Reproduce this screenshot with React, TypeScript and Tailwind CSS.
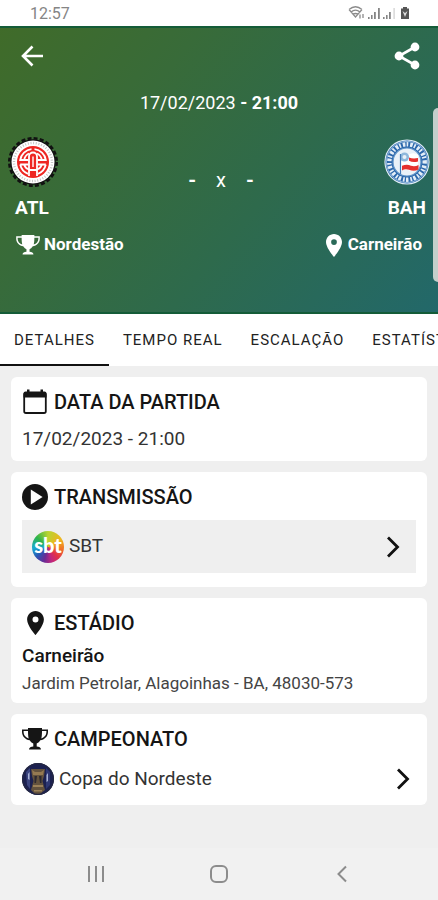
import type { ReactNode } from "react";

function TrophyIcon({ className }: { className: string }) {
  return (
    <svg viewBox="0 0 26 22" className={className} aria-hidden="true">
      <path
        d="M6 0H20V1.500H26V4C26 8.500 22.500 11.700 18.300 12.300C17.200 14 15.700 15.200 14.700 15.600V18.500C17 18.700 19 19.500 19 21.500H7C7 19.500 9 18.700 11.300 18.500V15.600C10.300 15.200 8.800 14 7.700 12.300C3.500 11.700 0 8.500 0 4V1.500H6ZM1.600 3V4C1.600 7 3.800 9.600 6.700 10.400C6.200 8.500 6 6.200 6 3ZM24.400 3H20C20 6.200 19.800 8.500 19.300 10.400C22.200 9.600 24.400 7 24.400 4Z"
        fill="currentColor"
        fillRule="evenodd"
      />
    </svg>
  );
}

function PinIcon({ className }: { className: string }) {
  return (
    <svg viewBox="5 2 14 20" className={className} aria-hidden="true">
      <path
        d="M12 2C8.130 2 5 5.130 5 9c0 5.250 7 13 7 13s7-7.750 7-13c0-3.870-3.130-7-7-7zm0 9.500a2.500 2.500 0 1 1 0-5 2.500 2.500 0 0 1 0 5z"
        fill="currentColor"
      />
    </svg>
  );
}

function CalendarIcon() {
  return (
    <svg viewBox="0 0 24 26" className="h-[26px] w-6" aria-hidden="true">
      <rect x="1.200" y="4" width="21.600" height="20" rx="1.800" fill="none" stroke="currentColor" strokeWidth="1.800" />
      <path d="M0.500 8.500V4.500a2 2 0 0 1 2-2H4V0.500H6.500V2.500H17.500V0.500H20V2.500H21.500a2 2 0 0 1 2 2V8.500Z" fill="currentColor" />
    </svg>
  );
}

function PlayIcon() {
  return (
    <svg viewBox="0 0 26 26" className="size-[26px]" aria-hidden="true">
      <circle cx="13" cy="13" r="13" fill="currentColor" />
      <path d="M8.800 5.500V20.500L20.600 13Z" fill="#fff" />
    </svg>
  );
}

function ChevronRight() {
  return (
    <svg viewBox="0 0 14 22" className="h-[22px] w-3.5" aria-hidden="true">
      <path d="M2 1.500L11.500 11L2 20.500" fill="none" stroke="#111" strokeWidth="2.800" />
    </svg>
  );
}

function AtlCrest() {
  return (
    <svg viewBox="-25 -25 50 50" className="size-[50px]" role="img" aria-label="ATL">
      <circle r="22.800" fill="#111" />
      <circle r="23.700" fill="none" stroke="#111" strokeWidth="2.600" strokeDasharray="4 2.200" />
      <circle r="21.500" fill="#fff" />
      <circle r="19" fill="none" stroke="#c4c4c4" strokeWidth="2.400" strokeDasharray="1 1.700" />
      <circle r="16" fill="#ee2622" />
      <g fill="none" stroke="#fff" strokeWidth="1.800">
        <path d="M-1.500-12.800A12.900 12.900 0 0 0-12.800-2H-4.500M1.500-12.800A12.900 12.900 0 0 1 12.800-2H4.500" />
        <path d="M-12.800 2.500H-4.500M12.800 2.500H4.500M-12.800 2.500A12.900 12.900 0 0 0-5 11.800M12.800 2.500A12.900 12.900 0 0 1 5 11.800" />
        <path d="M-4 14V-5.500A4 4 0 0 1 4-5.500V14M-4 8H4" />
        <path d="M-4-8.500A8.500 8.500 0 0 0-8.800-2M4-8.500A8.500 8.500 0 0 1 8.800-2M-8.800 2.500Q-8 6-4 7.500M8.800 2.500Q8 6 4 7.500" />
        <path d="M0-5.500V5" strokeWidth="1.400" />
      </g>
    </svg>
  );
}

function BahCrest() {
  return (
    <svg viewBox="-23 -23 46 46" className="size-[46px]" role="img" aria-label="BAH">
      <circle r="22.600" fill="#e3eff8" />
      <circle r="21.500" fill="#2b67ab" />
      <circle r="17.700" fill="none" stroke="#e4eef7" strokeWidth="4.400" strokeDasharray="1.700 1.900 2.600 1.300" />
      <circle r="20.600" fill="none" stroke="#9cbfe0" strokeWidth="0.900" />
      <circle r="14" fill="#e9f1f8" />
      <circle r="14" fill="none" stroke="#5f93c8" strokeWidth="1.200" />
      <path d="M-6-8.500Q-1-6 3-8Q7-10 11-7V7.500Q6 10.500 1 8Q-3 7-6 9Z" fill="#fff" />
      <path d="M2-4.500Q6-2.800 11-4V-0.500Q6 1 2-1.200ZM-5 3.800Q0 1.500 4 3.800Q8 5 11.500 3V7.500Q7 9.800 2 7.800Q-2 6.500-5 8.500Z" fill="#e5302d" />
      <circle cx="-2.500" cy="-5" r="4.600" fill="#8fb8dc" />
      <circle cx="-2.500" cy="-5" r="2" fill="#e9f1f8" />
      <path d="M-6.500-8V12" stroke="#3f78b6" strokeWidth="1.200" />
    </svg>
  );
}

function SbtLogo() {
  return (
    <span className="flex size-8 items-center justify-center rounded-full bg-[conic-gradient(#b9d432,#f0b51f_60deg,#f0702a_100deg,#e2304a_135deg,#c0267e_165deg,#6b2a94_195deg,#2a56b4_230deg,#18a8d0_265deg,#2db34a_310deg,#b9d432)]">
      <svg viewBox="0 0 32 32" className="size-8" aria-hidden="true">
        <text x="16" y="22" textAnchor="middle" fontFamily="Lato, sans-serif" fontWeight="900" fontSize="20" fill="#fff">
          sbt
        </text>
      </svg>
    </span>
  );
}

function CupBadge() {
  return (
    <svg viewBox="0 0 32 32" className="size-8" aria-hidden="true">
      <circle cx="16" cy="16" r="16" fill="#1c2150" />
      <path d="M4 9L8 5V26L5 22Z" fill="#3b4580" />
      <path d="M24 5L28 9V22L24 26Z" fill="#2e3772" />
      <path d="M6 11L7.500 9V17L6 16ZM24.500 12L26 10V18L24.500 19Z" fill="#a9b3d6" />
      <path d="M9 6H23L22 13L20.500 18L23 27L18 31H13L9 27L11.500 18L10 13Z" fill="#63523d" />
      <path d="M10 7L13 9H19L22 7L21 12H11Z" fill="#957a52" />
      <path d="M12.500 13H15L14 20H12.500ZM17 13H19.500V20H18Z" fill="#2c2830" />
      <path d="M11 22H21V24H11ZM12 27H20V28.500H12Z" fill="#9b8158" />
      <circle cx="16" cy="16" r="15.400" fill="none" stroke="#252842" strokeWidth="1.200" />
    </svg>
  );
}

function StatusBar() {
  return (
    <div className="flex h-[26px] items-center justify-between bg-white pr-7 pl-[30px] text-[#858585]">
      <span className="pt-0.5 text-base">12:57</span>
      <svg viewBox="0 0 62 16" className="h-4 w-[62px]" aria-hidden="true">
        <g fill="none" stroke="#8b8b8b" strokeWidth="1.300">
          <path d="M1 4.500Q7.500-1 14 4.500M3 7Q7.500 3.300 12 7M5.200 9.500Q7.500 7.500 9.800 9.500M1 4.500L7.500 12L14 4.500" />
          <path d="M12 9.500V13.500M15 9V13" />
        </g>
        <g fill="#858585">
          <path d="M20 12h1.600v2H20ZM23 10h1.600v4H23ZM26 7h1.800v7H26ZM30 3h1.800v11H30Z" />
          <path d="M35 12h1.600v2H35ZM38 10h1.600v4H38ZM41 7h1.800v7H41Z" />
          <path d="M45.500 3h1.200v11h-1.200Z" opacity=".4" />
          <path d="M55 2h4v1.500h2V14H53V3.500h2Z" fill="#555" />
        </g>
        <path d="M54.500 6L57 8L59.500 6L57 12Z" fill="#ddd" />
      </svg>
    </div>
  );
}

function MatchHeader() {
  return (
    <header className="relative border-y-2 border-[#145c38] bg-[linear-gradient(130deg,#406b29_0%,#386b39_30%,#2e6a4c_60%,#22686a_100%)] bg-origin-border pb-[55px] text-white">
      <div className="flex h-14 items-center justify-between pr-[18px] pl-[21px]">
        <button type="button" aria-label="Voltar">
          <svg viewBox="0 0 22 22" className="size-[22px]" aria-hidden="true">
            <path d="M22 11H2.500M11.500 1.500L2 11L11.500 20.500" fill="none" stroke="#fff" strokeWidth="2.600" />
          </svg>
        </button>
        <button type="button" aria-label="Compartilhar">
          <svg viewBox="0 0 26 28" className="h-7 w-[26px]" aria-hidden="true">
            <path d="M21 5L5 14L21 23" fill="none" stroke="#fff" strokeWidth="2.600" />
            <circle cx="21" cy="5" r="4.400" fill="#fff" />
            <circle cx="5" cy="14" r="4.400" fill="#fff" />
            <circle cx="21" cy="23" r="4.400" fill="#fff" />
          </svg>
        </button>
      </div>
      <p className="mt-[7px] text-center text-lg leading-6">
        17/02/2023 <b>- 21:00</b>
      </p>
      <div className="mt-[22px] flex items-start justify-between px-2">
        <div>
          <AtlCrest />
          <p className="mt-[9px] pl-[7px] text-[19px] leading-6 font-bold">ATL</p>
        </div>
        <div className="flex h-[86px] items-center gap-5 text-xl">
          <b>-</b>
          <span>x</span>
          <b>-</b>
        </div>
        <div className="flex flex-col items-end">
          <div className="py-0.5">
            <BahCrest />
          </div>
          <p className="mt-[9px] pr-1 text-[19px] leading-6 font-bold">BAH</p>
        </div>
      </div>
      <div className="mt-2.5 flex h-6 items-center justify-between px-4 text-[17px] font-bold">
        <p className="flex items-center gap-1">
          <TrophyIcon className="h-5 w-6" />
          Nordestão
        </p>
        <p className="flex items-center gap-1.5">
          <PinIcon className="h-[23px] w-4" />
          Carneirão
        </p>
      </div>
      <div className="absolute top-20 right-0 h-[174px] w-[5px] rounded-l-md bg-[#c3cfcb]" />
    </header>
  );
}

const tabs = ["DETALHES", "TEMPO REAL", "ESCALAÇÃO", "ESTATÍSTICAS"];

function Tabs() {
  return (
    <nav className="flex h-[52px] overflow-hidden bg-white text-[15px] tracking-[1px] text-[#222]">
      {tabs.map((tab, index) => (
        <button
          key={tab}
          type="button"
          className={`shrink-0 border-b-2 px-3.5 pt-0.5 whitespace-nowrap ${index === 0 ? "border-[#111]" : "border-transparent"}`}
        >
          {tab}
        </button>
      ))}
    </nav>
  );
}

function Card({ icon, title, children }: { icon: ReactNode; title: string; children: ReactNode }) {
  return (
    <section className="rounded-md bg-white px-[11px] pt-3">
      <h2 className="flex h-[26px] items-center gap-1.5 text-xl font-medium text-[#151515]">
        <span className="flex w-[26px] justify-center">{icon}</span>
        {title}
      </h2>
      {children}
    </section>
  );
}

function NavBar() {
  return (
    <footer className="mt-auto grid h-[52px] grid-cols-3 bg-[#f1f1f1] px-[35px] text-[#8c8c8c]">
      <button type="button" aria-label="Recentes" className="flex items-center justify-center">
        <svg viewBox="0 0 18 18" className="size-[18px]" aria-hidden="true">
          <path d="M2 1V17M9 1V17M16 1V17" stroke="currentColor" strokeWidth="2" />
        </svg>
      </button>
      <button type="button" aria-label="Início" className="flex items-center justify-center">
        <svg viewBox="0 0 18 18" className="size-[18px]" aria-hidden="true">
          <rect x="1" y="1" width="16" height="16" rx="5" fill="none" stroke="currentColor" strokeWidth="2" />
        </svg>
      </button>
      <button type="button" aria-label="Voltar" className="flex items-center justify-center">
        <svg viewBox="0 0 10 18" className="h-[18px] w-2.5" aria-hidden="true">
          <path d="M9 1.500L1.500 9L9 16.500" fill="none" stroke="currentColor" strokeWidth="2" />
        </svg>
      </button>
    </footer>
  );
}

export default function App() {
  return (
    <div className="flex min-h-screen flex-col bg-[#efefef] font-[Roboto,sans-serif]">
      <StatusBar />
      <MatchHeader />
      <Tabs />
      <main className="flex flex-col gap-[11px] px-[11px] pt-[11px]">
        <Card icon={<CalendarIcon />} title="DATA DA PARTIDA">
          <p className="pt-3 pb-2.5 text-[19px] leading-6 text-[#333]">17/02/2023 - 21:00</p>
        </Card>
        <Card icon={<PlayIcon />} title="TRANSMISSÃO">
          <div className="pt-2.5 pb-3.5">
            <button
              type="button"
              className="flex h-[53px] w-full items-center gap-[5px] bg-[#efefef] pr-4 pl-2.5 text-[19px] text-[#333]"
            >
              <SbtLogo />
              SBT
              <span className="ml-auto">
                <ChevronRight />
              </span>
            </button>
          </div>
        </Card>
        <Card icon={<PinIcon className="h-6 w-[17px]" />} title="ESTÁDIO">
          <p className="pt-2 text-[19px] leading-6 font-medium text-[#151515]">Carneirão</p>
          <p className="pt-1 pb-[9px] text-[17px] leading-[22px] text-[#444]">
            Jardim Petrolar, Alagoinhas - BA, 48030-573
          </p>
        </Card>
        <Card icon={<TrophyIcon className="h-[22px] w-[26px]" />} title="CAMPEONATO">
          <button
            type="button"
            className="mt-[11px] mb-2.5 flex h-8 w-full items-center gap-[5px] pr-1.5 text-[19px] text-[#333]"
          >
            <CupBadge />
            Copa do Nordeste
            <span className="ml-auto">
              <ChevronRight />
            </span>
          </button>
        </Card>
      </main>
      <NavBar />
    </div>
  );
}
